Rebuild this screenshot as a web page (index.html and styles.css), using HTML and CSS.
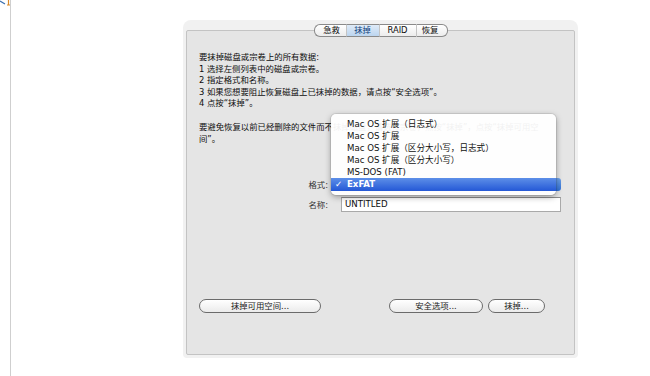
FILE: index.html
```html
<!DOCTYPE html>
<html lang="zh-CN">
<head>
  <meta charset="UTF-8">
  <title>抹掉</title>
  <link rel="stylesheet" href="styles.css">
</head>
<body>
  <div class="page">
    <div class="sidebar">
      <svg class="corner" width="11" height="7" viewBox="0 0 11 7">
        <path d="M0 1 L5 4" stroke="#3a6fb0" stroke-width="1.2" fill="none"/>
        <path d="M8.5 0 L8.5 5 M7 5 L10 5" stroke="#d98a2b" stroke-width="1.2" fill="none"/>
      </svg>
    </div>

    <div class="main">
      <div class="panel">
        <div class="tabs">
          <span class="tab first">急救</span>
          <span class="tab active">抹掉</span>
          <span class="tab raid">RAID</span>
          <span class="tab last">恢复</span>
        </div>

        <div class="box">
          <div class="steps">
            <p>要抹掉磁盘或宗卷上的所有数据:</p>
            <p>1 选择左侧列表中的磁盘或宗卷。</p>
            <p>2 指定格式和名称。</p>
            <p>3 如果您想要阻止恢复磁盘上已抹掉的数据，请点按“安全选项”。</p>
            <p>4 点按“抹掉”。</p>
          </div>

          <p class="note">要避免恢复以前已经删除的文件而不抹掉磁盘，请选择宗卷，点按“抹掉”，点按“抹掉可用空<br>间”。</p>

          <div class="form">
            <label>格式:</label>
            <div class="popup">
              <div class="popup-button">ExFAT</div>
              <ul class="menu">
                <li>Mac OS 扩展（日志式）</li>
                <li>Mac OS 扩展</li>
                <li>Mac OS 扩展（区分大小写，日志式）</li>
                <li>Mac OS 扩展（区分大小写）</li>
                <li>MS-DOS (FAT)</li>
                <li class="selected"><span class="check">✓</span>ExFAT</li>
              </ul>
            </div>

            <label>名称:</label>
            <div class="field">UNTITLED</div>
          </div>

          <div class="actions">
            <button class="btn wide">抹掉可用空间...</button>
            <button class="btn secure">安全选项...</button>
            <button class="btn small">抹掉...</button>
          </div>
        </div>
      </div>
    </div>
  </div>
</body>
</html>
```

FILE: styles.css
```css
* {
  margin: 0;
  padding: 0;
  box-sizing: border-box;
}

body {
  background: #ffffff;
  font-family: "DejaVu Sans", "Noto Sans CJK SC", sans-serif;
  font-size: 8.4px;
  color: #0d0d0d;
  width: 650px;
  height: 376px;
  overflow: hidden;
}

.page {
  display: flex;
  height: 376px;
}

/* Left strip */
.sidebar {
  width: 11px;
  border-right: 1px solid #cfcfcf;
  position: relative;
}

.corner {
  position: absolute;
  left: 0;
  top: 0;
}

.main {
  flex: 1;
  padding: 20px 0 0 172px;
}

/* Panel */
.panel {
  width: 395px;
  height: 338px;
  background: #f1f1f1;
  border-radius: 8px 8px 4px 4px;
  padding: 4px 3px 3px 3px;
  display: flex;
  flex-direction: column;
}

.tabs {
  display: flex;
  justify-content: center;
  position: relative;
  z-index: 2;
  margin-bottom: -7px;
}

.tab {
  height: 13px;
  width: 33px;
  line-height: 11px;
  text-align: center;
  white-space: nowrap;
  background: linear-gradient(#ffffff, #ececec);
  border: 1px solid #8a8a8a;
  border-left: 1px solid #c4c4c4;
  border-right: none;
  font-size: 8.4px;
}

.tab.first {
  width: 32px;
  border-left: 1px solid #8a8a8a;
  border-radius: 6px 0 0 6px;
  padding-left: 3px;
}

.tab.raid {
  width: 37px;
}

.tab.last {
  width: 32px;
  border-right: 1px solid #8a8a8a;
  border-radius: 0 6px 6px 0;
  padding-right: 3px;
}

.tab.active {
  background: linear-gradient(#dfebf8, #bcd5ef);
  color: #0f3c7a;
}

.box {
  flex: 1;
  background: #e5e5e5;
  border: 1px solid #c3c3c3;
  border-radius: 2px;
  padding: 21px 13px 0 12px;
}

.steps p {
  line-height: 11.5px;
}

.note {
  margin-top: 11px;
  line-height: 12px;
  white-space: nowrap;
}

/* Format / name rows */
.form {
  display: grid;
  grid-template-columns: 129px 220px;
  column-gap: 13px;
  row-gap: 6px;
  margin-top: 33px;
  align-items: center;
}

.form label {
  text-align: right;
  color: #333;
}

.popup {
  position: relative;
  height: 13px;
}

.popup-button {
  height: 13px;
  border-radius: 3px;
  background: linear-gradient(#6ea2e8, #2f6fd6);
  color: #fff;
  line-height: 13px;
  padding-left: 6px;
}

.menu {
  list-style: none;
  position: absolute;
  left: -10px;
  top: -64px;
  width: 225px;
  padding: 4px 0 4px 0;
  background: rgba(255, 255, 255, 0.94);
  border-radius: 5px;
  box-shadow: 0 2px 6px rgba(0, 0, 0, 0.35), 0 0 0 1px rgba(0, 0, 0, 0.08);
  z-index: 3;
}

.menu li {
  height: 12px;
  line-height: 12px;
  padding-left: 16px;
  color: #111;
  font-size: 8.6px;
}

.menu li.selected {
  height: 13px;
  line-height: 13px;
  padding-left: 4px;
  background: linear-gradient(#5d8fe8, #2458d6);
  color: #fff;
  font-weight: bold;
}

.check {
  display: inline-block;
  width: 12px;
}

.field {
  height: 15px;
  background: #fff;
  border: 1px solid #a9a9a9;
  border-top-color: #8c8c8c;
  line-height: 13px;
  padding-left: 3px;
  font-size: 8.6px;
}

/* Buttons */
.actions {
  display: flex;
  margin-top: 87px;
}

.btn {
  height: 14px;
  border: 1px solid #6b6b6b;
  border-radius: 7px;
  background: linear-gradient(#ffffff, #ebebeb);
  font-family: "DejaVu Sans", "Noto Sans CJK SC", sans-serif;
  font-size: 8.4px;
  color: #1a1a1a;
  line-height: 12px;
}

.btn.wide {
  width: 122px;
}

.btn.secure {
  width: 94px;
  margin-left: 68px;
}

.btn.small {
  width: 57px;
  margin-left: 5px;
}
```
